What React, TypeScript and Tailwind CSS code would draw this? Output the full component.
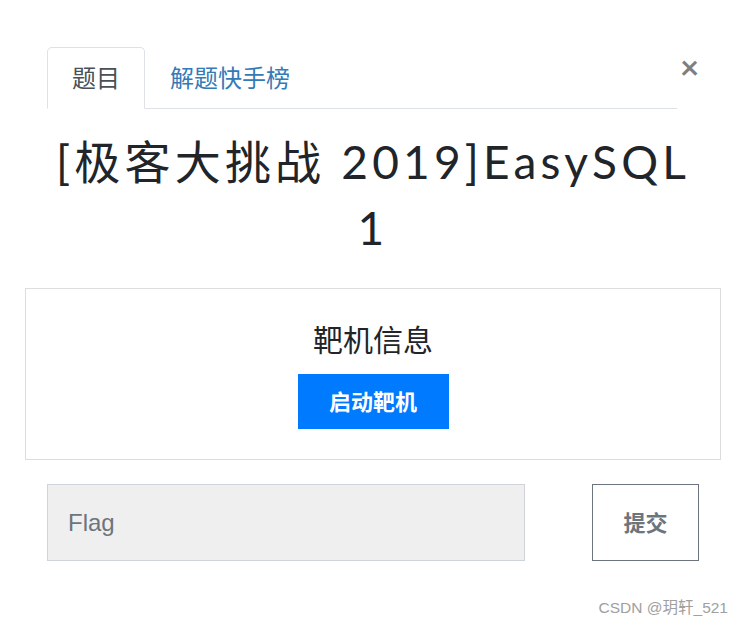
export default function App() {
  return (
    <div className="relative h-[628px] w-[742px] overflow-hidden bg-white font-['Lato','Noto_Sans_CJK_SC',sans-serif] text-[#212529]">
      <div className="flex flex-col pl-[25px] pr-[21px] pt-[47px]">
        <div className="flex items-start pl-[22px] pr-[24px]">
          <div className="flex flex-1 border-b border-[#dee2e6]">
            <div className="-mb-px flex h-[62px] w-[98px] items-center justify-center rounded-t-[5px] border border-b-white border-[#dee2e6] bg-white text-[24px] text-[#495057]">
              题目
            </div>
            <div className="flex h-[61px] items-center px-[25px] text-[24px] text-[#337ab7]">解题快手榜</div>
          </div>
          <button className="ml-[3px] mt-[3px] w-[17px] text-[33px] leading-none font-bold text-[#7f7f7f]">×</button>
        </div>

        <h1 className="mt-[20px] text-center text-[46px] leading-[66px] font-normal tracking-[4.2px]">
          [极客大挑战 2019]EasySQL
          <br />1
        </h1>

        <div className="mt-[27px] flex h-[172px] flex-col items-center border border-[#dddddd] pt-[30px]">
          <div className="text-[30px] leading-[40px]">靶机信息</div>
          <button className="mt-[15px] h-[55px] w-[151px] bg-[#007bff] text-[22px] font-bold text-white">启动靶机</button>
        </div>

        <div className="mt-[24px] flex items-start pl-[22px] pr-[22px]">
          <input
            className="h-[77px] w-[478px] border border-[#ced4da] bg-[#efefef] px-[20px] font-['Liberation_Sans',sans-serif] text-[24px] text-[#495057] placeholder:text-[#6c757d] outline-none"
            placeholder="Flag"
          />
          <div className="flex-1" />
          <button className="h-[77px] w-[107px] border border-[#6c757d] bg-white text-[22px] font-bold text-[#6c757d]">提交</button>
        </div>
      </div>
      <div className="absolute bottom-[9px] right-[14px] font-['Liberation_Sans','Noto_Sans_CJK_SC',sans-serif] text-[15.5px] text-[#a0a0a0]">
        CSDN @玥轩_521
      </div>
    </div>
  );
}
